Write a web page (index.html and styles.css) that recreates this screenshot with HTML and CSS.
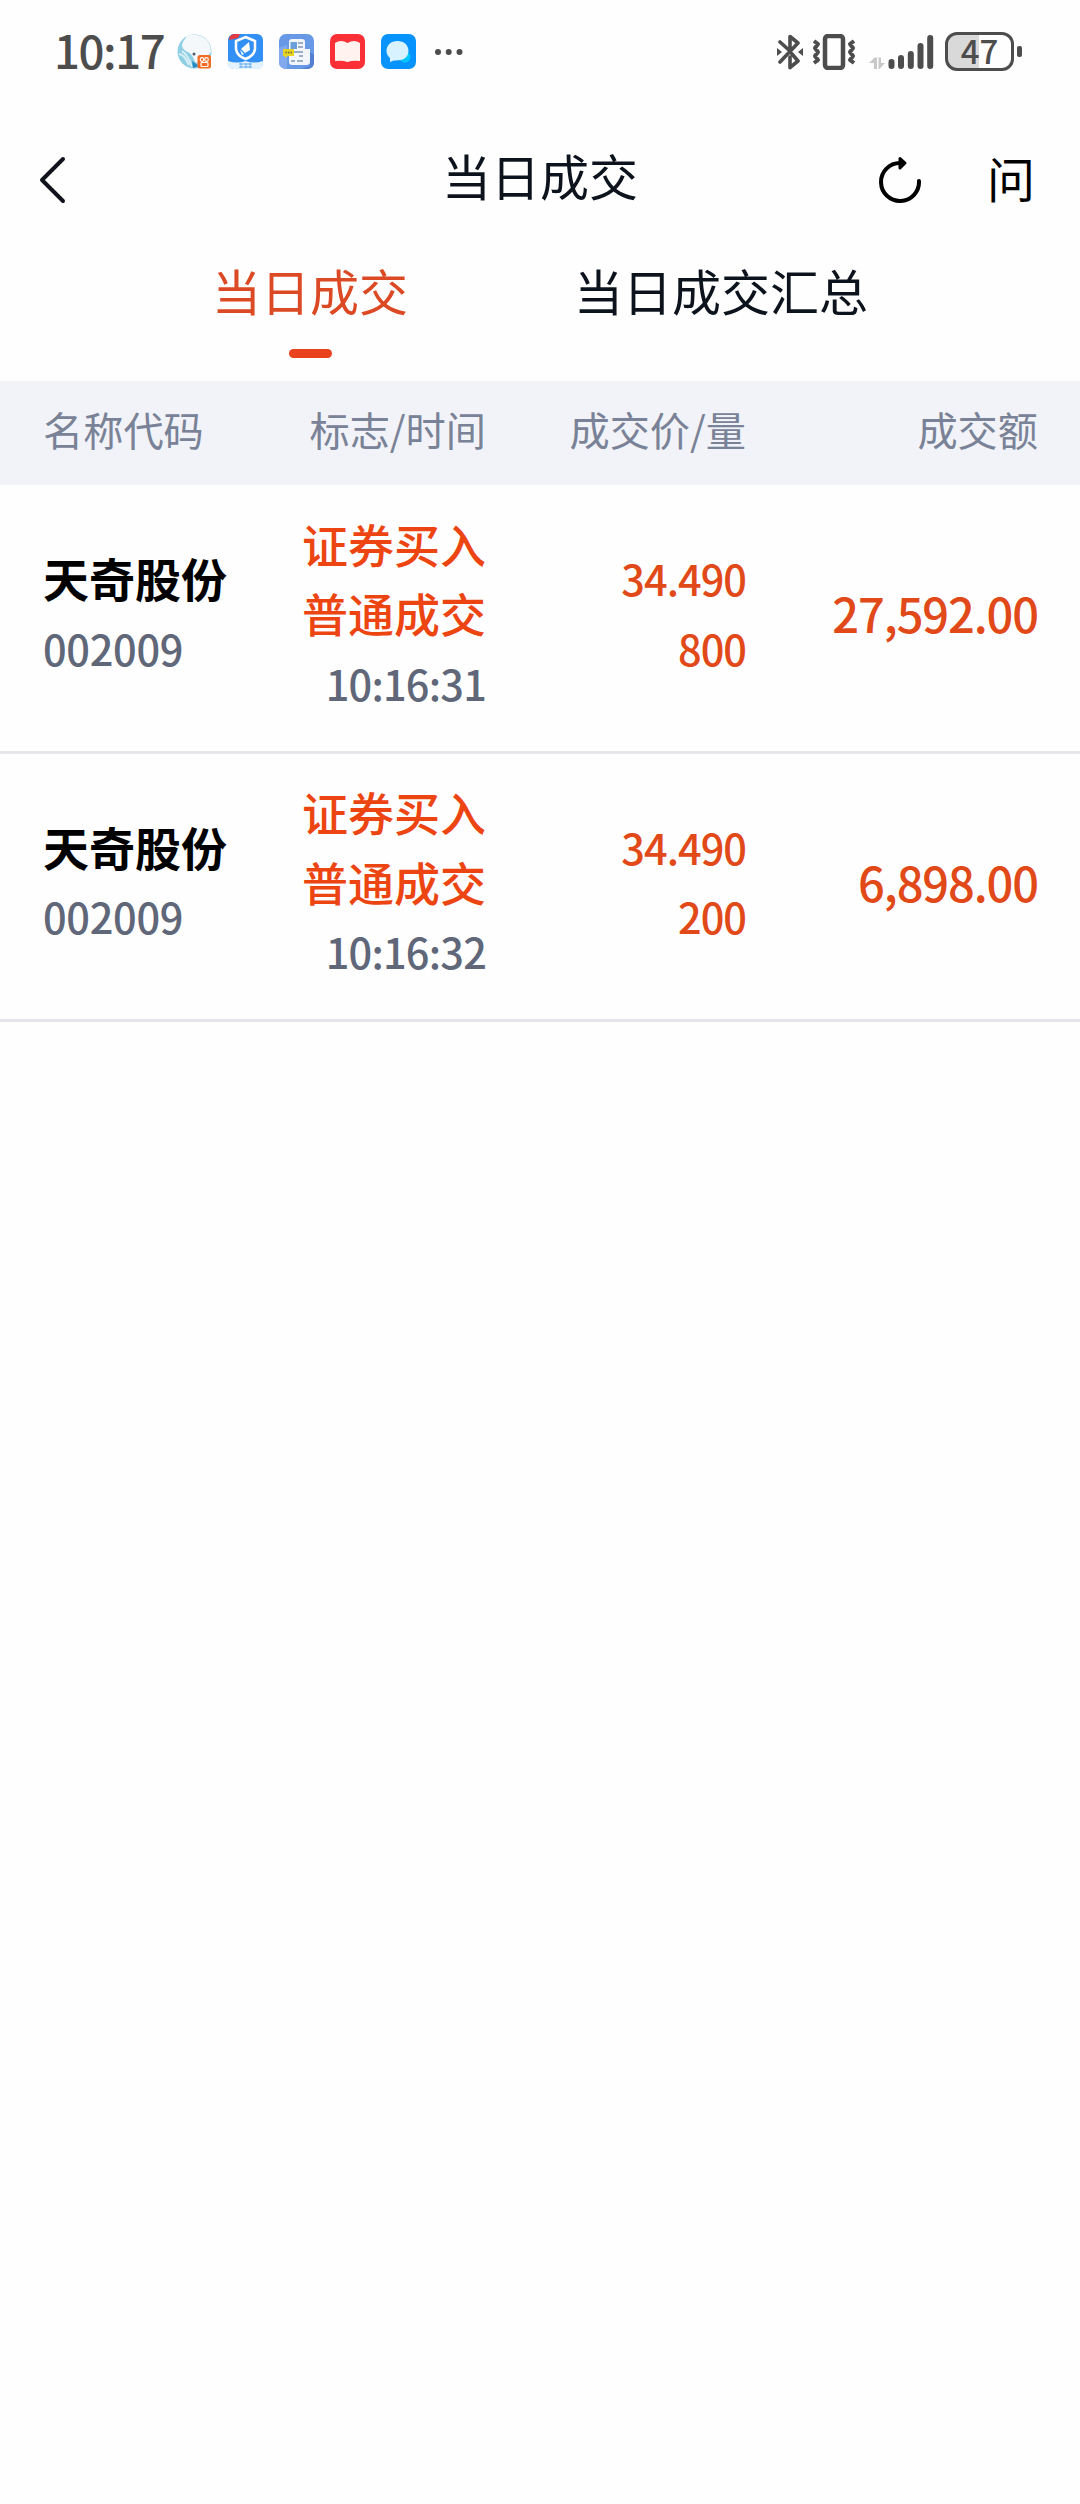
FILE: index.html
```
<!DOCTYPE html>
<html lang="zh-CN">
<head>
  <meta charset="UTF-8" />
  <meta name="viewport" content="width=device-width, initial-scale=1.0"/>
  <title>当日成交</title>
  <link rel="stylesheet" href="styles.css">
</head>
<body>
  <div class="status-bar">
    <div class="status-left">
      <span class="clock">10:17</span>
      <div class="app-icons">
        <svg width="35" height="35" viewBox="0 0 35 35">
          <circle cx="17.5" cy="17.5" r="17" fill="#8fcfe3"/>
          <path d="M10 2Q18-1 26 3Q34 8 34 18L24 30L18 28Q16 20 9 17Q3 13 6 8Q7 6 10 2Z" fill="#f5f8fa"/>
          <path d="M2 20Q7 20 12 31M5 17Q11 21 15 33" fill="none" stroke="#d9eff6" stroke-width="2"/>
          <circle cx="17" cy="20" r="1.500" fill="#4b5b68"/>
          <path d="M15 27L22 32L16 34Z" fill="#258bc0"/>
          <rect x="20.500" y="21" width="13.500" height="13.500" rx="2.500" fill="#f36b21"/>
          <circle cx="25" cy="25.500" r="1.800" fill="none" stroke="#fff" stroke-width="1.200"/>
          <circle cx="29.500" cy="25.500" r="1.800" fill="none" stroke="#fff" stroke-width="1.200"/>
          <rect x="24" y="28.500" width="7" height="4" rx="1" fill="none" stroke="#fff" stroke-width="1.200"/>
        </svg>
        <svg width="35" height="35" viewBox="0 0 35 35">
          <rect width="35" height="35" rx="6" fill="#3290f5"/>
          <path d="M1 5Q2 0 7 0H12L10 4L1 6Z" fill="#e33a41"/>
          <path d="M17.500 3L27 7V15Q26 22 17.500 25Q9 22 8 15V7Z" fill="#3290f5" stroke="#fff" stroke-width="2.500"/>
          <path d="M21 8L22 16L17 19L13 15Z" fill="#fff"/>
          <path d="M12 16L16 20L14 21Z" fill="#fff"/>
          <path d="M0 27Q9 30 17.500 27Q26 30 35 27V29Q35 35 29 35H6Q0 35 0 29Z" fill="#e3f2ff"/>
          <path d="M11 30H24M11 33H24M13 29V34M18 29V34M22 29V34" stroke="#65aaf0" stroke-width="1"/>
        </svg>
        <svg width="35" height="35" viewBox="0 0 35 35">
          <rect width="35" height="35" rx="7" fill="#6799e6"/>
          <path d="M0 14L8 11V35Q0 35 0 28Z" fill="#82a9ef"/>
          <path d="M22 35L31 32V18L35 21V28Q35 35 28 35Z" fill="#527fcf"/>
          <path d="M24 15H31V28Q31 31 27 31H13Q10 31 10 28V8Q10 5 13 5H23Q26 5 26 8V29" fill="#f2f6fb"/>
          <rect x="11.500" y="8" width="6.500" height="7" fill="#6b9fdc"/>
          <path d="M19 9H24M19 13H24M15 18H24M20 22H24M12 27H16M18 27H24" stroke="#9caec6" stroke-width="2"/>
          <path d="M4 15H15V22H9L6 24V22H4Z" fill="#e6d322"/>
          <path d="M6.500 18.500H13" stroke="#625e38" stroke-width="1.400" stroke-dasharray="1.400 1.200"/>
        </svg>
        <svg width="35" height="35" viewBox="0 0 35 35">
          <rect width="35" height="35" rx="7" fill="#fa3036"/>
          <path d="M5 9Q11 5 17.500 9Q24 5 30 9V27Q23 26 17.500 28Q12 26 5 27Z" fill="#fff2ef"/>
        </svg>
        <svg width="35" height="35" viewBox="0 0 35 35">
          <rect width="35" height="35" rx="7" fill="#0793fe"/>
          <circle cx="24" cy="23" r="5.500" fill="#00c6ff"/>
          <path d="M16.500 7C10 7 5.500 11 5.500 17Q5.500 21 9 24V28L13 26.500Q27 27 27.500 17C27.500 11 23 7 16.500 7Z" fill="#d8f2ff"/>
        </svg>
      </div>
      <svg class="more" width="30" height="8" viewBox="0 0 30 8" fill="#4d4d4d">
        <circle cx="4" cy="4" r="3"/>
        <circle cx="14.700" cy="4" r="3"/>
        <circle cx="25.500" cy="4" r="3"/>
      </svg>
    </div>
    <div class="status-right">
      <svg width="26" height="36" viewBox="0 0 26 36" fill="none" stroke="#4d4d4d" stroke-width="3.600" stroke-linejoin="round" stroke-linecap="round">
        <path d="M3 8L13 17V2.500L21 9L3 28M15 20L21 27L13 33.500V23"/>
        <path d="M0 14L5 18L0 22ZM26 14L21 18L26 22Z" fill="#4d4d4d" stroke="none"/>
      </svg>
      <svg class="vibrate" width="44" height="36" viewBox="0 0 44 36" fill="none" stroke="#4d4d4d">
        <rect x="13" y="2" width="18" height="32" rx="3" stroke-width="4.500"/>
        <path d="M2 7L6 10L3 14L6 18L3 22L6 26L2 29M42 7L38 10L41 14L38 18L41 22L38 26L42 29" stroke-width="4" stroke-linejoin="round"/>
      </svg>
      <svg width="65" height="36" viewBox="0 0 65 36" stroke="#4d4d4d" stroke-width="6" stroke-linecap="round">
        <path d="M0 29L5.500 23.500H8V35H5V29ZM9.500 23.500H12V29H16L10.500 35H9.500Z" fill="#c8c8c8" stroke="none"/>
        <path d="M22.500 28V32M32 24V32M41.800 20V32M51.500 12V32M61.200 4V32"/>
      </svg>
      <div class="battery"><span>47</span></div>
    </div>
  </div>

  <header class="nav">
    <svg class="back" width="28" height="48" viewBox="0 0 28 48" fill="none" stroke="#10141a" stroke-width="4" stroke-linecap="round" stroke-linejoin="round">
      <path d="M24 3L3 24L24 45"/>
    </svg>
    <h1>当日成交</h1>
    <div class="nav-actions">
      <svg width="44" height="48" viewBox="0 0 44 48" fill="none" stroke="#000" stroke-width="4" stroke-linecap="round">
        <path d="M40 25A19 19 0 1 1 21 7"/>
        <path d="M21 2.500L26 7L21 12Z" fill="#000" stroke-width="3" stroke-linejoin="round"/>
      </svg>
      <span class="ask">问</span>
    </div>
  </header>

  <nav class="tabs">
    <div class="tab active">当日成交</div>
    <div class="tab">当日成交汇总</div>
  </nav>

  <div class="grid table-head">
    <span>名称代码</span>
    <span>标志/时间</span>
    <span>成交价/量</span>
    <span>成交额</span>
  </div>

  <div class="grid row">
    <div class="stock">
      <div class="name">天奇股份</div>
      <div class="num code">002009</div>
    </div>
    <div class="type">
      <div class="flag">证券买入</div>
      <div class="flag">普通成交</div>
      <div class="num time">10:16:31</div>
    </div>
    <div class="price">
      <div class="num">34.490</div>
      <div class="num">800</div>
    </div>
    <div class="amount">27,592.00</div>
  </div>

  <div class="grid row">
    <div class="stock">
      <div class="name">天奇股份</div>
      <div class="num code">002009</div>
    </div>
    <div class="type">
      <div class="flag">证券买入</div>
      <div class="flag">普通成交</div>
      <div class="num time">10:16:32</div>
    </div>
    <div class="price">
      <div class="num">34.490</div>
      <div class="num">200</div>
    </div>
    <div class="amount">6,898.00</div>
  </div>
</body>
</html>
```
FILE: styles.css
```
* { box-sizing: border-box; }

body {
  margin: 0;
  min-height: 100vh;
  font-family: "Noto Sans CJK SC", sans-serif;
  background: #fefefe;
  color: #0d131c;
}

svg {
  display: block;
  flex: none;
}

/* phone status bar */
.status-bar {
  display: flex;
  justify-content: space-between;
  align-items: center;
  height: 103px;
  padding: 0 66px 0 54px;
}

.status-left,
.status-right,
.app-icons {
  display: flex;
  align-items: center;
}

.clock {
  width: 123px;
  padding-bottom: 5px;
  font-size: 45.5px;
  font-weight: 500;
  line-height: 60px;
  letter-spacing: -1.4px;
  color: #4d4d4d;
}

.app-icons { gap: 16px; }

.more { margin-left: 18px; }

.status-right { gap: 11px; }

.vibrate { margin: 0 2px 0 -2px; }

.battery {
  position: relative;
  width: 69px;
  height: 39px;
  border: 3px solid #4d4d4d;
  border-radius: 12px;
  background: linear-gradient(90deg, #d9d9d9 50%, #fefefe 50%);
  color: #4d4d4d;
  font-size: 33px;
  font-weight: 500;
  line-height: 30px;
  text-align: center;
}

.battery::after {
  content: "";
  position: absolute;
  right: -11px;
  top: 11px;
  width: 5px;
  height: 11px;
  border-radius: 2px;
  background: #4d4d4d;
}

/* title bar */
.nav {
  display: grid;
  grid-template-columns: 1fr auto 1fr;
  align-items: center;
  height: 154px;
  padding: 0 45px 0 39px;
}

.nav h1 {
  margin: 0;
  padding: 0 0 11px 6px;
  font-size: 49px;
  font-weight: 400;
  line-height: 72px;
}

.nav-actions {
  display: flex;
  justify-content: flex-end;
  align-items: center;
  gap: 64px;
}

.ask {
  padding-bottom: 7px;
  font-size: 48px;
  line-height: 48px;
  color: #000;
}

.tabs {
  display: flex;
  height: 124px;
  padding-left: 212px;
  gap: 166px;
}

.tab {
  display: flex;
  flex-direction: column;
  align-items: center;
  font-size: 49px;
  line-height: 66px;
}

.tab.active { color: #dc4a25; }

.tab.active::after {
  content: "";
  width: 43px;
  height: 9px;
  margin-top: 26px;
  border-radius: 5px;
  background: #e8431c;
}

/* trade list */
.grid {
  display: grid;
  grid-template-columns: 200px 243px 260px 292px;
  align-items: center;
  padding-left: 43px;
}

.grid > :not(:first-child) { text-align: right; }

.table-head {
  height: 104px;
  padding-bottom: 9px;
  background: #f2f3f8;
  color: #798296;
  font-size: 40.2px;
}

.row {
  height: 268.5px;
  padding-bottom: 10px;
  border-bottom: 3px solid #e4e6ea;
  line-height: 69.5px;
}

.name {
  font-size: 46px;
  font-weight: 700;
  color: #000;
}

.num {
  padding-top: 1px;
  font-size: 41.5px;
  font-weight: 500;
  line-height: 68.5px;
  letter-spacing: -0.3px;
}

.code,
.time { color: #5f6779; }

.time { letter-spacing: -0.8px; }

.flag {
  font-size: 46px;
  font-weight: 500;
  color: #ec4511;
}

.price,
.amount { color: #e14919; }

.price .num { letter-spacing: -1px; }

.amount {
  font-size: 47px;
  font-weight: 500;
  letter-spacing: -1.1px;
}
```
